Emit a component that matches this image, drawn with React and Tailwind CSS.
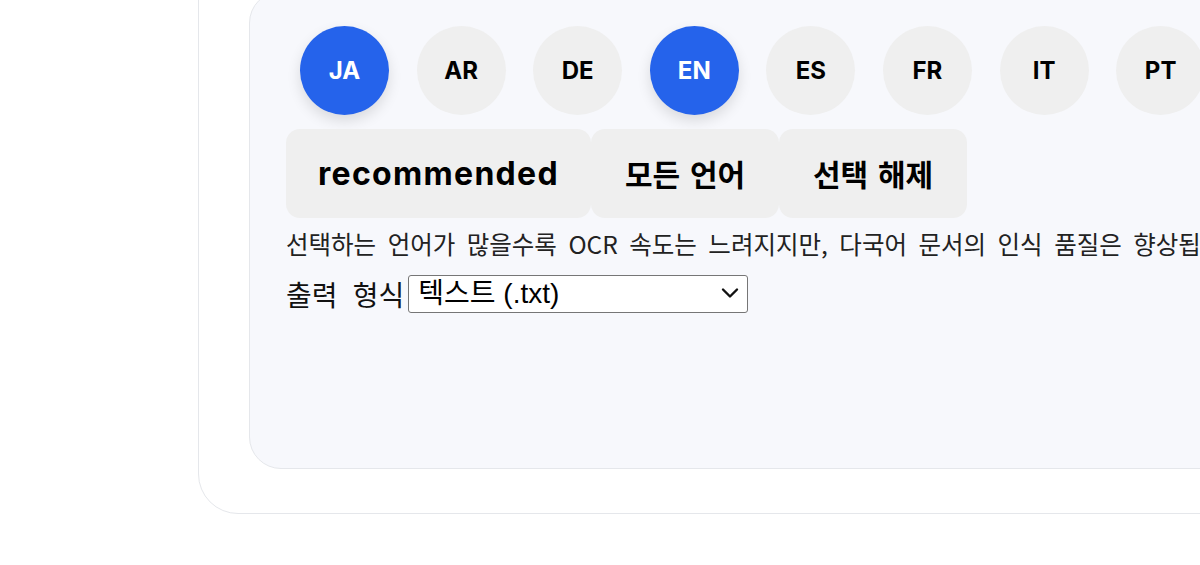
import React, { useState } from "react"

const langs = ["JA", "AR", "DE", "EN", "ES", "FR", "IT", "PT", "RU", "KO", "ZH"]

export default function App() {
  const [picked, setPicked] = useState(["JA", "EN"])

  const toggle = (code) => {
    setPicked((p) => (p.includes(code) ? p.filter((c) => c !== code) : [...p, code]))
  }

  return (
    <div className="w-full h-[565px] overflow-hidden bg-white font-['Noto_Sans_CJK_KR','Noto_Sans',sans-serif]">
      <div className="ml-[198px] -mt-[60px] w-[1200px] rounded-[40px] border border-[#e5e7eb] bg-white pl-[50px] pt-[50px] pb-[44px]">
        <div className="rounded-[32px] border border-[#e5e7eb] bg-[#f7f8fc] pl-[36px] pt-[20px] pb-[155px]">
          {/* language chips */}
          <div className="flex flex-nowrap">
            {langs.map((code) => {
              const on = picked.includes(code)
              return (
                <button
                  key={code}
                  onClick={() => toggle(code)}
                  className={`shrink-0 my-[14px] mx-[13.8px] first:ml-[14px] w-[89px] h-[89px] rounded-full flex items-center justify-center font-['Inter',sans-serif] text-[24px] font-bold ${
                    on ? "bg-[#2563eb] text-white shadow-[0_6px_14px_rgba(0,0,0,0.12)]" : "bg-[#efefef] text-black"
                  }`}
                >
                  {code}
                </button>
              )
            })}
          </div>

          <div className="flex">
            <button className="h-[89px] w-[305px] rounded-[14px] bg-[#efefef] font-['Inter',sans-serif] text-[32px] font-bold tracking-[1.3px] text-black">
              recommended
            </button>
            <button onClick={() => setPicked([...langs])} className="h-[89px] w-[188px] rounded-[14px] bg-[#efefef] text-[30px] font-bold [word-spacing:3px] text-black">
              모든 언어
            </button>
            <button onClick={() => setPicked([])} className="h-[89px] w-[188px] rounded-[14px] bg-[#efefef] text-[30px] font-bold [word-spacing:3px] text-black">
              선택 해제
            </button>
          </div>

          <p className="mt-[12px] whitespace-nowrap text-[24.5px] leading-[28px] [word-spacing:6px] text-[#222]">
            선택하는 언어가 많을수록 OCR 속도는 느려지지만, 다국어 문서의 인식 품질은 향상됩니다.
          </p>

          <div className="mt-[17px] flex items-center">
            <label className="text-[28px] leading-[36px] [word-spacing:9px] text-[#111]">출력 형식</label>
            <div className="relative ml-[4px]">
              <select
                defaultValue="txt"
                className="appearance-none w-[340px] h-[38px] rounded-[3px] border border-[#767676] bg-white pl-[9px] font-['Liberation_Sans','Noto_Sans_CJK_KR',sans-serif] text-[28px] leading-[34px] text-black"
              >
                <option value="txt">텍스트 (.txt)</option>
                <option value="pdf">PDF (.pdf)</option>
                <option value="docx">워드 (.docx)</option>
              </select>
              <svg className="pointer-events-none absolute right-[9px] top-[12px]" width="18" height="12" viewBox="0 0 18 12" fill="none">
                <path d="M2 2.5L9 9.5L16 2.5" stroke="#111" strokeWidth="2.4" strokeLinecap="round" strokeLinejoin="round" />
              </svg>
            </div>
          </div>
        </div>
      </div>
    </div>
  )
}
